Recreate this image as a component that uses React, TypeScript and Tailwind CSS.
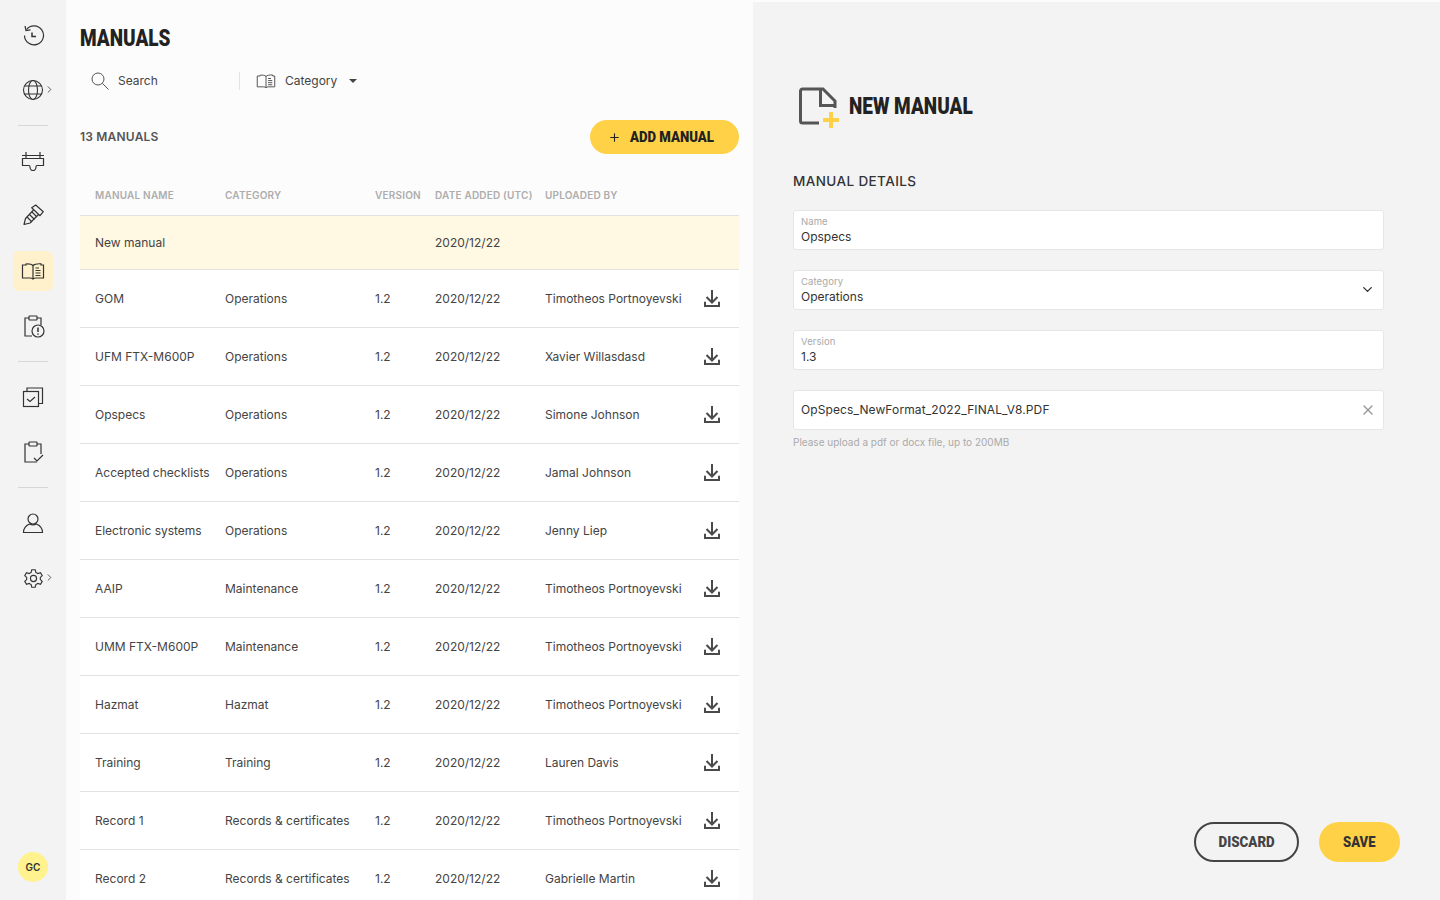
import { ChevronDown, ChevronRight, Plus, X } from "lucide-react";

const manuals = [
  { name: "GOM", category: "Operations", by: "Timotheos Portnoyevski" },
  { name: "UFM FTX-M600P", category: "Operations", by: "Xavier Willasdasd" },
  { name: "Opspecs", category: "Operations", by: "Simone Johnson" },
  { name: "Accepted checklists", category: "Operations", by: "Jamal Johnson" },
  { name: "Electronic systems", category: "Operations", by: "Jenny Liep" },
  { name: "AAIP", category: "Maintenance", by: "Timotheos Portnoyevski" },
  { name: "UMM FTX-M600P", category: "Maintenance", by: "Timotheos Portnoyevski" },
  { name: "Hazmat", category: "Hazmat", by: "Timotheos Portnoyevski" },
  { name: "Training", category: "Training", by: "Lauren Davis" },
  { name: "Record 1", category: "Records & certificates", by: "Timotheos Portnoyevski" },
  { name: "Record 2", category: "Records & certificates", by: "Gabrielle Martin" },
];

function BookIcon({ size = 24 }: { size?: number }) {
  return (
    <svg width={size} height={size} viewBox="0 0 24 24" fill="none" stroke="currentColor" strokeWidth="1.2">
      <path d="M12 6.500C10.500 5 8 4.800 5 5v1H1.500v13H9c1.300 0 2.300.3 3 1 .7-.7 1.700-1 3-1h7.500V6H20V4.800c-3.500-.2-6.500.2-8 1.700Z" />
      <path d="M12 6.500V20M14.500 9h3.500M14.500 11.500h5M14.500 14h5M14.500 16.500h5" />
    </svg>
  );
}

function NavItem({ children, active, more }: { children: React.ReactNode; active?: boolean; more?: boolean }) {
  return (
    <div className={`relative flex h-10 w-10 items-center justify-center rounded-md ${active ? "bg-[#fff1cb]" : ""}`}>
      {children}
      {more && <ChevronRight className="absolute right-[-2px] top-[14px] text-[#333]" size={11} strokeWidth={1.7} />}
    </div>
  );
}

function Divider() {
  return <div className="h-px w-[30px] bg-[#d6d6d6]" />;
}

function Sidebar() {
  return (
    <aside className="flex h-full w-[66px] shrink-0 flex-col items-center bg-[#f3f3f3] pt-[15px] text-[#333]">
      <NavItem>
        <svg width="24" height="24" viewBox="0 0 24 24" fill="none" stroke="currentColor" strokeWidth="1.2">
          <path d="M5.500 6.500A9.500 9.500 0 1 1 3.500 12.500" />
          <path d="M4 3 5 7.500 9.500 6.800" />
          <path d="M11 9.500v4h4" strokeWidth="1.500" />
        </svg>
      </NavItem>
      <div className="mt-[15px]">
        <NavItem more>
          <svg width="22" height="22" viewBox="0 0 22 22" fill="none" stroke="currentColor" strokeWidth="1.100">
            <circle cx="11" cy="11" r="9.500" />
            <ellipse cx="11" cy="11" rx="4.500" ry="9.500" />
            <path d="M2.500 7h17M2.500 15h17" />
          </svg>
        </NavItem>
      </div>
      <div className="mb-[15px] mt-[15px]">
        <Divider />
      </div>
      <NavItem>
        <svg width="24" height="24" viewBox="0 0 24 24" fill="none" stroke="currentColor" strokeWidth="1.200">
          <path d="M1 6.500h22M5 3v6M19 3v6" />
          <path d="M1.500 9.500h21v7H16c-.5 0-1 .5-1 1.500 0 2-1.500 3.500-3 3.500s-3-1.500-3-3.500c0-1-.5-1.500-1-1.500H1.500Z" />
        </svg>
      </NavItem>
      <div className="mt-[15px]">
        <NavItem>
          <svg width="24" height="24" viewBox="0 0 24 24" fill="none" stroke="currentColor" strokeWidth="1.200" strokeLinejoin="round">
            <path d="M10.700 3.700 14.700 1 22.300 7.700 19 11.700Z" />
            <path d="M12.500 6 4.500 14.500 3 20.500 9 19 17.500 10.500" />
            <path d="M6 13l5 5M8.500 10.500l5 5M11 8l5 5" />
          </svg>
        </NavItem>
      </div>
      <div className="mt-[15px]">
        <NavItem active>
          <BookIcon />
        </NavItem>
      </div>
      <div className="mt-[15px]">
        <NavItem>
          <svg width="24" height="24" viewBox="0 0 24 24" fill="none" stroke="currentColor" strokeWidth="1.200">
            <path d="M8 4H4v18h7M16 4h4v7" />
            <rect x="8" y="2" width="8" height="4" rx=".5" />
            <circle cx="17" cy="17" r="6" />
            <path d="M17 13.500v4.500M17 19.500v1.300" strokeWidth="1.500" />
          </svg>
        </NavItem>
      </div>
      <div className="mb-[15px] mt-[15px]">
        <Divider />
      </div>
      <NavItem>
        <svg width="24" height="24" viewBox="0 0 24 24" fill="none" stroke="currentColor" strokeWidth="1.200">
          <rect x="2.500" y="6.500" width="15" height="15" />
          <path d="M6 6.500V3h15.500v15.500H17.500" />
          <path d="M6 14l3 2.500 5-4.500" />
        </svg>
      </NavItem>
      <div className="mt-[15px]">
        <NavItem>
          <svg width="24" height="24" viewBox="0 0 24 24" fill="none" stroke="currentColor" strokeWidth="1.200">
            <path d="M8 4H4v18h12M16 4h4v10" />
            <rect x="8" y="2" width="8" height="4" rx=".5" />
            <path d="M13 18l3 3 6-6" />
          </svg>
        </NavItem>
      </div>
      <div className="mb-[15px] mt-[15px]">
        <Divider />
      </div>
      <NavItem>
        <svg width="24" height="24" viewBox="0 0 24 24" fill="none" stroke="currentColor" strokeWidth="1.200">
          <circle cx="12" cy="8" r="5" />
          <path d="M2.500 21.500c0-3.500 2.500-7 6-8.500 2 1 5 1 7 0 3.500 1.500 6 5 6 8.500Z" />
        </svg>
      </NavItem>
      <div className="mt-[15px]">
        <NavItem more>
          <svg width="21" height="21" viewBox="0 0 24 24" fill="none" stroke="currentColor" strokeWidth="1.300">
            <circle cx="12" cy="12" r="3.500" />
            <path d="M10 2h4l.7 3 2.300 1.300 3-1 2 3.400-2.200 2.100v2.400l2.200 2.100-2 3.400-3-1L14.700 19 14 22h-4l-.7-3L7 17.700l-3 1-2-3.400 2.200-2.100v-2.400L2 8.700l2-3.400 3 1L9.300 5Z" />
          </svg>
        </NavItem>
      </div>
      <div className="mb-[18px] mt-auto flex h-[30px] w-[30px] items-center justify-center rounded-full bg-[#fff28f] text-[10px] font-semibold text-[#333]">
        GC
      </div>
    </aside>
  );
}

function ManualsPanel() {
  return (
    <main className="h-full w-[687px] shrink-0 overflow-hidden bg-[#fcfcfc] px-[14px]">
      <h1 className="mt-[23px] h-[30px] origin-left scale-x-[0.79] font-['Roboto',sans-serif] text-[24px] font-black leading-[30px] text-[#222]">
        MANUALS
      </h1>
      <div className="mt-[19px] flex h-[18px] items-center text-[#444]">
        <div className="flex w-[159px] items-center pl-[11px]">
          <svg width="18" height="18" viewBox="0 0 18 18" fill="none" stroke="#555" strokeWidth="1">
            <circle cx="7" cy="7" r="6" />
            <path d="M11.300 11.300 17.500 17.500" />
          </svg>
          <span className="ml-[9px] text-[12px]">Search</span>
        </div>
        <div className="h-[18px] w-px bg-[#e3e3e3]" />
        <div className="ml-[16px] text-[#555]">
          <BookIcon size={20} />
        </div>
        <span className="ml-[9px] text-[12px]">Category</span>
        <div className="ml-[12px] h-0 w-0 border-x-[4px] border-t-[4px] border-x-transparent border-t-[#444]" />
      </div>
      <div className="mt-[30px] flex h-[34px] items-center justify-between">
        <span className="text-[12px] font-semibold tracking-[0.2px] text-[#555]">13 MANUALS</span>
        <button className="flex h-[34px] w-[149px] items-center rounded-full bg-[#ffd147] pl-[18px] text-[#222]">
          <Plus size={13} strokeWidth={2} />
          <span className="ml-[9px] origin-left translate-y-[1px] scale-x-[0.85] font-['Roboto',sans-serif] text-[15.500px] font-black">ADD MANUAL</span>
        </button>
      </div>
      <div className="mt-[23px] grid h-[39px] grid-cols-[130px_150px_60px_110px_1fr] items-center border-b border-[#e2e2e2] pb-[2px] pl-[15px] text-[10px] font-semibold tracking-[0.2px] text-[#adadad]">
        <span>MANUAL NAME</span>
        <span>CATEGORY</span>
        <span>VERSION</span>
        <span>DATE ADDED (UTC)</span>
        <span>UPLOADED BY</span>
      </div>
      <div className="grid h-[54px] grid-cols-[130px_150px_60px_110px_1fr] items-center border-b border-[#e2e2e2] bg-[#fff8e2] pl-[15px] text-[12px] text-[#444]">
        <span>New manual</span>
        <span />
        <span />
        <span>2020/12/22</span>
      </div>
      {manuals.map((m) => (
        <div
          key={m.name}
          className="grid h-[58px] grid-cols-[130px_150px_60px_110px_150px_1fr] items-center border-b border-[#e2e2e2] bg-white pl-[15px] text-[12px] text-[#444]"
        >
          <span className="whitespace-nowrap">{m.name}</span>
          <span className="whitespace-nowrap">{m.category}</span>
          <span>1.2</span>
          <span>2020/12/22</span>
          <span className="whitespace-nowrap">{m.by}</span>
          <svg className="mb-[2px] ml-[7px]" width="20" height="20" viewBox="0 0 20 20" fill="none" stroke="#4a4a4a" strokeWidth="2">
            <path d="M10 2v12M4.500 9l5.500 5.500L15.500 9" />
            <path d="M3 14.500V18h14v-3.500" strokeLinecap="round" />
          </svg>
        </div>
      ))}
    </main>
  );
}

function Field({ label, value, icon }: { label: string; value: string; icon?: React.ReactNode }) {
  return (
    <div className="relative flex h-10 w-[591px] flex-col justify-center rounded-[3px] border border-[#e6e6e6] bg-white px-[7px]">
      <span className="text-[9.500px] leading-[13px] tracking-[0.1px] text-[#a9a9a9]">{label}</span>
      <span className="text-[12px] leading-[17px] text-[#333]">{value}</span>
      {icon}
    </div>
  );
}

function DetailPanel() {
  return (
    <section className="mt-[2px] flex h-[898px] flex-1 flex-col bg-[#f3f3f3] px-[40px]">
      <div className="mt-[84px] flex h-[42px] items-center">
        <svg className="ml-[6px]" width="40" height="42" viewBox="0 0 40 42">
          <path d="M20 37H3.500a2 2 0 0 1-2-2V5a2 2 0 0 1 2-2H24l12 12v7" fill="none" stroke="#555" strokeWidth="3" />
          <path d="M21.500 3v16.500H36" fill="none" stroke="#555" strokeWidth="3" />
          <path d="M24 34h16M32 26v16" stroke="#ffd147" strokeWidth="4" />
        </svg>
        <h2 className="ml-[10px] origin-left -translate-y-[1px] scale-x-[0.79] font-['Roboto',sans-serif] text-[24px] font-black text-[#222]">NEW MANUAL</h2>
      </div>
      <h3 className="mt-[44px] text-[13.500px] font-medium leading-[18px] tracking-[0.4px] text-[#333]">MANUAL DETAILS</h3>
      <div className="mt-[20px] flex flex-col gap-5">
        <Field label="Name" value="Opspecs" />
        <Field
          label="Category"
          value="Operations"
          icon={<ChevronDown size={15} strokeWidth={2.2} className="absolute right-[8px] top-[11px] text-[#333]" />}
        />
        <Field label="Version" value="1.3" />
        <div className="relative flex h-10 w-[591px] items-center rounded-[3px] border border-[#e6e6e6] bg-white px-[7px] text-[12px] tracking-[0.1px] text-[#333]">
          OpSpecs_NewFormat_2022_FINAL_V8.PDF
          <X size={16} strokeWidth={2} className="absolute right-[7px] top-[11px] text-[#999]" />
        </div>
      </div>
      <p className="mt-[6px] text-[10px] leading-[13px] text-[#aaa]">Please upload a pdf or docx file, up to 200MB</p>
      <div className="mb-[38px] mt-auto flex justify-end gap-5">
        <button className="h-10 w-[105px] rounded-full border-2 border-[#444] text-[#444]">
          <span className="inline-block scale-x-[0.86] font-['Roboto',sans-serif] text-[15.500px] font-black">DISCARD</span>
        </button>
        <button className="h-10 w-[81px] rounded-full bg-[#ffd147] text-[#333]">
          <span className="inline-block scale-x-[0.84] font-['Roboto',sans-serif] text-[15.500px] font-black">SAVE</span>
        </button>
      </div>
    </section>
  );
}

export default function App() {
  return (
    <div className="flex h-[900px] w-[1440px] overflow-hidden bg-[#fcfcfc] font-['Inter',sans-serif]">
      <Sidebar />
      <ManualsPanel />
      <DetailPanel />
    </div>
  );
}
